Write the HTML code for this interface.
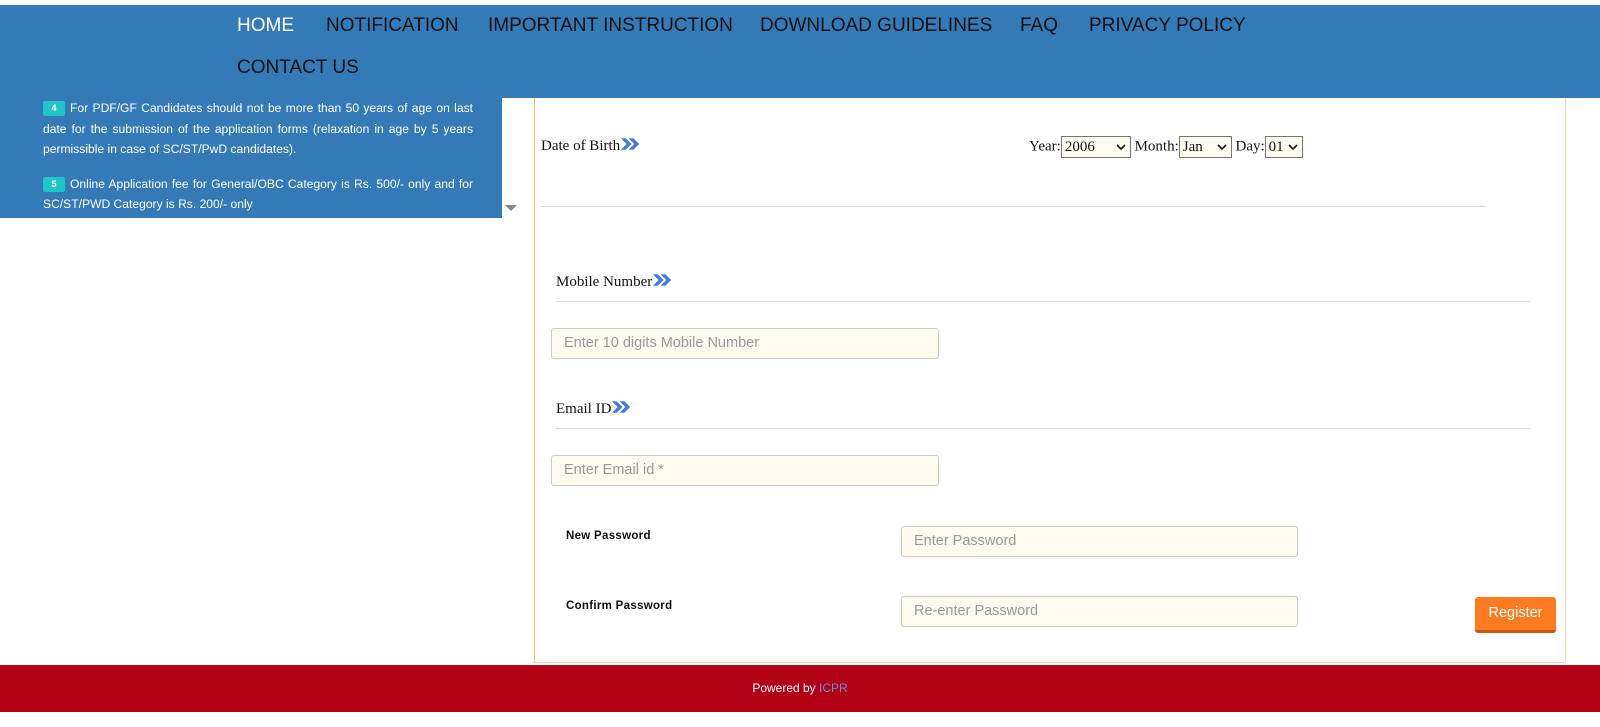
<!DOCTYPE html>
<html><head><meta charset="utf-8"><style>
*{margin:0;padding:0;box-sizing:border-box}
body{width:1600px;height:727px;position:relative;background:#fff;font-family:"Liberation Sans",sans-serif;overflow:hidden}
.a{position:absolute}
.nav{left:0;top:5px;width:1600px;height:93px;background:#337ab7}
.nav span{position:absolute;font-size:19px;color:#111;white-space:nowrap}
.side{left:0;top:98px;width:502px;height:120px;background:#337ab7;color:#fff;font-size:12.1px;line-height:20.5px;text-align:justify;padding:0 29px 0 43px}
.badge{display:inline-block;background:#1fc6c9;color:#fff;font-size:9px;font-weight:bold;width:22px;height:15px;line-height:15px;text-align:center;border-radius:2px;margin-right:5px;vertical-align:1px}
.box{left:534px;top:98px;width:1032px;height:565px;border:1px solid #f0d7a7;border-left:1px solid #e8c76a;border-top:none}
.serif{font-family:"Liberation Serif",serif;font-size:15px;color:#111}
.chev{display:inline-block;vertical-align:-1px}
.line{height:1px;background:#ddd}
.inp{border:1px solid #ccc;background:#fdfbee;border-radius:3px;color:#999;font-size:14.5px;padding-left:12px;line-height:29px;height:31px}
.sel{display:inline-block;border:1px solid #767676;background:#fdfbee;font-size:15px;height:22px;line-height:20px;padding-left:3px;vertical-align:middle;position:relative}
.sel svg{position:absolute;right:4px;top:7px}
.lbl{font-size:11.5px;font-weight:bold;color:#111;letter-spacing:.3px}
</style></head><body>
<div class="a nav">
<span style="left:237px;top:10px;color:#fff">HOME</span>
<span style="left:326px;top:10px">NOTIFICATION</span>
<span style="left:488px;top:10px">IMPORTANT INSTRUCTION</span>
<span style="left:760px;top:10px">DOWNLOAD GUIDELINES</span>
<span style="left:1020px;top:10px">FAQ</span>
<span style="left:1089px;top:10px">PRIVACY POLICY</span>
<span style="left:237px;top:52px">CONTACT US</span>
</div>
<div class="a side">
<p style="margin-top:0"><span class="badge">4</span>For PDF/GF Candidates should not be more than 50 years of age on last date for the submission of the application forms (relaxation in age by 5 years permissible in case of SC/ST/PwD candidates).</p>
<p style="margin-top:14px"><span class="badge">5</span>Online Application fee for General/OBC Category is Rs. 500/- only and for SC/ST/PWD Category is Rs. 200/- only</p>
</div>
<div class="a" style="left:505px;top:205px;width:0;height:0;border-left:6px solid transparent;border-right:6px solid transparent;border-top:6px solid #888"></div>
<div class="a box"></div>
<svg width="0" height="0" style="position:absolute"><defs><symbol id="c" viewBox="0 0 22 14"><path d="M1 1h5l6 6-6 6H1l6-6z M9 1h5l6 6-6 6H9l6-6z" fill="#3d7be0"/></symbol><symbol id="v" viewBox="0 0 10 6"><path d="M1 1l4 4 4-4" stroke="#111" stroke-width="1.6" fill="none"/></symbol></defs></svg>
<div class="a serif" style="left:541px;top:137px">Date of Birth<svg class="chev" width="21" height="14"><use href="#c"/></svg></div>
<div class="a serif" style="left:1029px;top:136px">Year:<span class="sel" style="width:70px">2006<svg width="10" height="6"><use href="#v"/></svg></span> Month:<span class="sel" style="width:53px">Jan<svg width="10" height="6"><use href="#v"/></svg></span> Day:<span class="sel" style="width:38px">01<svg width="10" height="6"><use href="#v"/></svg></span></div>
<div class="a line" style="left:541px;top:206px;width:945px"></div>
<div class="a serif" style="left:556px;top:273px">Mobile Number<svg class="chev" width="21" height="14"><use href="#c"/></svg></div>
<div class="a line" style="left:556px;top:301px;width:974px"></div>
<div class="a inp" style="left:551px;top:328px;width:388px">Enter 10 digits Mobile Number</div>
<div class="a serif" style="left:556px;top:400px">Email ID<svg class="chev" width="21" height="14"><use href="#c"/></svg></div>
<div class="a line" style="left:556px;top:428px;width:974px"></div>
<div class="a inp" style="left:551px;top:455px;width:388px">Enter Email id *</div>
<div class="a lbl" style="left:566px;top:530px">New Password</div>
<div class="a inp" style="left:901px;top:526px;width:397px">Enter Password</div>
<div class="a lbl" style="left:566px;top:600px">Confirm Password</div>
<div class="a inp" style="left:901px;top:596px;width:397px">Re-enter Password</div>
<div class="a" style="left:1475px;top:597px;width:81px;height:36px;background:#fd7c1f;border-radius:3px;border-bottom:3px solid #c95a10;color:#fff;font-size:14.5px;text-align:center;line-height:33px">Register</div>
<div class="a" style="left:0;top:665px;width:1600px;height:47px;background:#b10016;color:#fff;font-size:12px;text-align:center;line-height:47px">Powered by <span style="color:#6b8ee0">ICPR</span></div>
</body></html>
